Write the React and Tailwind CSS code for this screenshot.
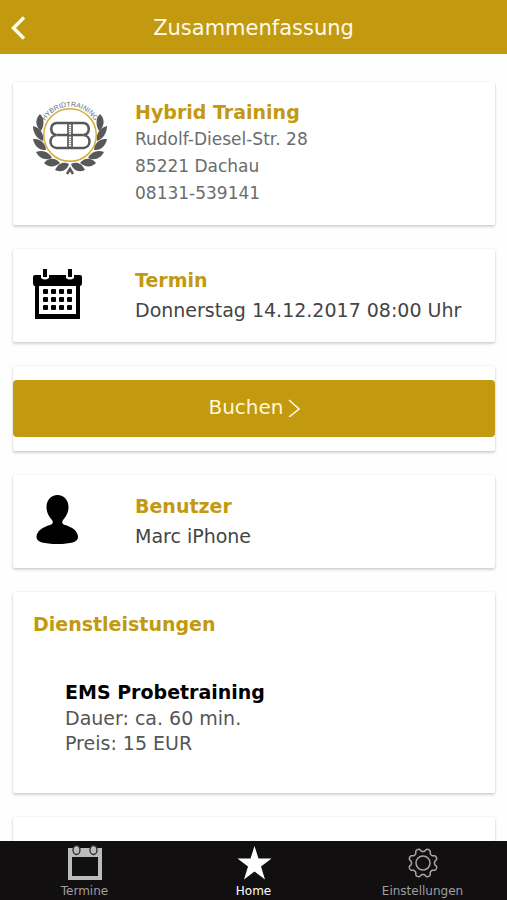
function Card({ className = "", children }) {
  return (
    <section
      className={`shrink-0 rounded-xs bg-white shadow-[0_2px_3px_rgba(0,0,0,0.16),0_0_2px_rgba(0,0,0,0.12)] ${className}`}
    >
      {children}
    </section>
  );
}

function LaurelBranch() {
  return (
    <>
      <path d="M7 13 C12 18 11 25 8 30 C2 25 2 18 7 13Z" />
      <path d="M0 25 C8 27 11 33 10 40 C4 38 0 32 0 25Z" />
      <path d="M0 38 C8 37 13 43 13 49 C6 50 1 44 0 38Z" />
      <path d="M3 51 C10 48 17 52 19 57 C12 60 6 57 3 51Z" />
      <path d="M11 62 C16 56 23 57 27 62 C21 67 15 66 11 62Z" />
      <path d="M22 69 C25 62 31 60 36 63 C34 69 29 72 22 69Z" />
    </>
  );
}

function Logo() {
  return (
    <svg className="h-[74px] w-[74px] overflow-visible" viewBox="0 0 74 74" role="img" aria-label="Hybridtraining">
      <defs>
        <path id="logo-arc" d="M10 25 A28.500 28.500 0 0 1 64 25" />
      </defs>
      <text fill="#6a6a6d" fontSize="7" fontFamily="Liberation Sans, sans-serif">
        <textPath href="#logo-arc" startOffset="50%" textAnchor="middle">
          HYBRIDTRAINING
        </textPath>
      </text>
      <circle cx="37" cy="34" r="26.300" fill="none" stroke="#d3af37" strokeWidth="1.500" />
      <g fill="#58585a">
        <LaurelBranch />
      </g>
      <g fill="#58585a" transform="matrix(-1 0 0 1 74 0)">
        <LaurelBranch />
      </g>
      <path d="M34 73 L37 68 L40 73" fill="none" stroke="#58585a" strokeWidth="2.500" />
      <g fill="none" stroke="#58585a" strokeWidth="2.500">
        <path d="M23.500 22 H50.500 C57.500 23 57.500 33 50.500 34 C58.500 35 58.500 46 50.500 47 H23.500 C15.500 46 15.500 35 23.500 34 C16.500 33 16.500 23 23.500 22Z" />
        <path d="M23.500 34 H50.500" />
        <path d="M35 22 V47 M39 22 V47" strokeWidth="1.700" />
        <path d="M37 23 V46" stroke="#a5a5a7" strokeWidth="2" strokeDasharray="1 1" />
      </g>
    </svg>
  );
}

function CalendarIcon() {
  return (
    <svg className="h-[50px] w-[50px]" viewBox="0 0 50 50" aria-hidden="true">
      <path d="M2 6 H47 Q49 6 49 8 V14 Q49 17 47 17 V50 H2 V17 Q0 17 0 14 V8 Q0 6 2 6Z" />
      <path d="M6 17 H43 V45 H6Z" fill="#fff" />
      <path d="M8 0 H16 V9 Q12 12 8 9Z M33 0 H41 V9 Q37 12 33 9Z" fill="#fff" />
      <path d="M10 0 H14 V8 H10Z M35 0 H39 V8 H35Z" />
      {[20, 28, 36].map((y) =>
        [10, 18, 26, 34].map((x) => <rect key={`${x}-${y}`} x={x} y={y} width="5" height="5" rx="1" />)
      )}
    </svg>
  );
}

function PersonIcon() {
  return (
    <svg className="h-[50px] w-[50px]" viewBox="0 0 50 50" aria-hidden="true">
      <path d="M24.500 0 C31 0 35.500 5 35.500 12 C35.500 18 32.500 22 30 25 C28.500 27.500 29 29 32 30 C39 32 45 36 45 42 C45 47 38 49 24.500 49 C11 49 3.500 47 3.500 42 C3.500 36 10 32 17 30 C20 29 20.500 27.500 19 25 C16.500 22 13.500 18 13.500 12 C13.500 5 18 0 24.500 0Z" />
    </svg>
  );
}

function TermineIcon() {
  return (
    <svg className="h-9 w-9" viewBox="0 0 36 36" aria-hidden="true">
      <path d="M1 3 H35 V35 H1Z" fill="#bdbcbd" />
      <path d="M5 12 H31 V31 H5Z" fill="#120f10" />
      <ellipse cx="9.500" cy="5" rx="3.500" ry="4.500" fill="#bdbcbd" stroke="#2c292a" strokeWidth="1.300" />
      <ellipse cx="26.500" cy="5" rx="3.500" ry="4.500" fill="#bdbcbd" stroke="#2c292a" strokeWidth="1.300" />
    </svg>
  );
}

function StarIcon() {
  return (
    <svg className="h-9 w-9" viewBox="0 0 36 36" aria-hidden="true">
      <path fill="#fff" d="M18.500 1 L22.500 13.500 H35.500 L25 21.500 L29 34.500 L18.500 26.500 L8 34.500 L12 21.500 L1.500 13.500 H14.500Z" />
    </svg>
  );
}

function gearPath() {
  const points = [];
  for (let i = 0; i < 160; i++) {
    const a = (i / 160) * Math.PI * 2;
    const wave = Math.tanh(1.6 * Math.cos(8 * (a - Math.PI / 8)));
    const r = 13 + 1.6 * wave;
    points.push(`${(18 + r * Math.cos(a)).toFixed(2)} ${(18 + r * Math.sin(a)).toFixed(2)}`);
  }
  return `M${points.join("L")}Z`;
}

function GearIcon() {
  return (
    <svg className="h-9 w-9" viewBox="0 0 36 36" fill="none" stroke="#a8a6a7" strokeWidth="1.500" aria-hidden="true">
      <path d={gearPath()} />
      <circle cx="18" cy="18" r="7" />
    </svg>
  );
}

function InfoRow({ icon, title, text }) {
  return (
    <Card className="flex items-start px-5 pt-[17px] pb-4">
      <div className="w-[102px] shrink-0 pt-[3px]">{icon}</div>
      <div className="whitespace-nowrap">
        <h2 className="text-[19px] leading-7 font-bold text-[#c2990f]">{title}</h2>
        <p className="text-[19px] leading-8 text-[#444]">{text}</p>
      </div>
    </Card>
  );
}

function Tab({ icon, label, active }) {
  return (
    <a
      href="#"
      aria-current={active ? "page" : undefined}
      className={`flex flex-1 flex-col items-center pt-1 text-xs leading-4 ${active ? "text-white" : "text-[#a09e9f]"}`}
    >
      {icon}
      <span className="pt-[2px]">{label}</span>
    </a>
  );
}

export default function App() {
  return (
    <div className="flex h-screen flex-col bg-[#fefefe] font-['DejaVu_Sans',sans-serif]">
      <header className="grid h-[54px] shrink-0 grid-cols-[40px_1fr_40px] items-center bg-[#c2990f] pt-[2px] text-[#fffbea]">
        <button type="button" aria-label="Zurück" className="pl-[10px]">
          <svg className="h-6 w-4" viewBox="0 0 16 24" fill="none" stroke="currentColor" strokeWidth="3.500" aria-hidden="true">
            <path d="M14 1.500 L3.500 12 L14 22.500" />
          </svg>
        </button>
        <h1 className="text-center text-[21px] leading-7">Zusammenfassung</h1>
      </header>

      <main className="flex min-h-0 flex-1 flex-col gap-6 overflow-hidden pt-7 pr-3 pl-[13px]">
        <Card className="flex items-start px-5 pt-[17px] pb-[18px]">
          <div className="w-[102px] shrink-0 pt-[2px]">
            <Logo />
          </div>
          <div className="text-[17px] leading-[27px] text-[#6c6c6c]">
            <h2 className="text-[19px] font-bold text-[#c2990f]">Hybrid Training</h2>
            <p>Rudolf-Diesel-Str. 28</p>
            <p>85221 Dachau</p>
            <p>08131-539141</p>
          </div>
        </Card>

        <InfoRow icon={<CalendarIcon />} title="Termin" text="Donnerstag 14.12.2017 08:00 Uhr" />

        <Card className="py-[14px]">
          <button
            type="button"
            className="flex h-[57px] w-full items-center justify-center rounded-sm bg-[#c2990f] pb-[3px] text-xl text-[#fff8dc]"
          >
            Buchen
            <svg className="h-5 w-4" viewBox="0 0 16 20" fill="none" stroke="currentColor" strokeWidth="1.600" aria-hidden="true">
              <path d="M5 3 L15 12 L5 20" />
            </svg>
          </button>
        </Card>

        <InfoRow icon={<PersonIcon />} title="Benutzer" text="Marc iPhone" />

        <Card className="px-5 pt-[18px] pb-[37px]">
          <h2 className="text-[19px] leading-7 font-bold text-[#c2990f]">Dienstleistungen</h2>
          <div className="pt-[41px] pl-8 text-[19px] leading-[25px] text-[#555]">
            <h3 className="leading-[27px] font-bold text-black">EMS Probetraining</h3>
            <p>Dauer: ca. 60 min.</p>
            <p>Preis: 15 EUR</p>
          </div>
        </Card>

        <Card className="h-24" />
      </main>

      <nav className="flex h-[59px] shrink-0 bg-[#120f10]">
        <Tab icon={<TermineIcon />} label="Termine" />
        <Tab icon={<StarIcon />} label="Home" active />
        <Tab icon={<GearIcon />} label="Einstellungen" />
      </nav>
    </div>
  );
}
